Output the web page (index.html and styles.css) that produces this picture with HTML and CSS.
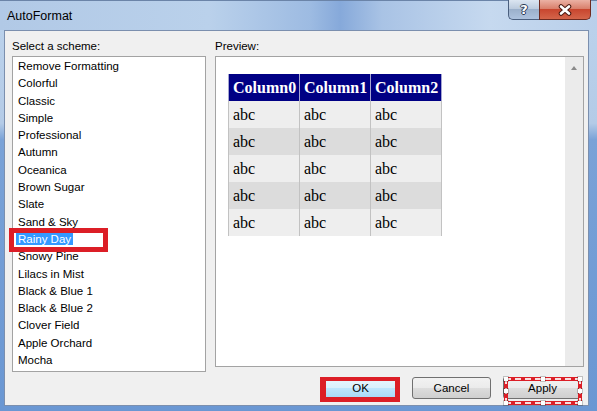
FILE: index.html
```html
<!DOCTYPE html>
<html>
<head>
    <title>AutoFormat</title>
    <link rel="stylesheet" href="styles.css">
</head>
<body>
    <div class="window">
        <div class="titlebar">
            <span class="title">AutoFormat</span>
            <div class="caption-buttons">
                <div class="cap-btn help">?</div>
                <div class="cap-btn close">
                    <svg width="14" height="12" viewBox="0 0 14 12">
                        <path d="M3 2.5 L11 9.5 M11 2.5 L3 9.5" stroke="#4a1a12" stroke-width="4.6" stroke-linecap="round"/>
                        <path d="M3 2.5 L11 9.5 M11 2.5 L3 9.5" stroke="#fff" stroke-width="2.6" stroke-linecap="round"/>
                    </svg>
                </div>
            </div>
        </div>

        <div class="frame">
            <div class="client">
                <div class="label">Select a scheme:</div>
                <div class="label">Preview:</div>

                <ul class="scheme-list">
                    <li>Remove Formatting</li>
                    <li>Colorful</li>
                    <li>Classic</li>
                    <li>Simple</li>
                    <li>Professional</li>
                    <li>Autumn</li>
                    <li>Oceanica</li>
                    <li>Brown Sugar</li>
                    <li>Slate</li>
                    <li>Sand &amp; Sky</li>
                    <li class="selected"><span>Rainy Day</span></li>
                    <li>Snowy Pine</li>
                    <li>Lilacs in Mist</li>
                    <li>Black &amp; Blue 1</li>
                    <li>Black &amp; Blue 2</li>
                    <li>Clover Field</li>
                    <li>Apple Orchard</li>
                    <li>Mocha</li>
                </ul>

                <div class="preview">
                    <div class="preview-area">
                        <table class="grid">
                            <tr><th>Column0</th><th>Column1</th><th>Column2</th></tr>
                            <tr><td>abc</td><td>abc</td><td>abc</td></tr>
                            <tr class="alt"><td>abc</td><td>abc</td><td>abc</td></tr>
                            <tr><td>abc</td><td>abc</td><td>abc</td></tr>
                            <tr class="alt"><td>abc</td><td>abc</td><td>abc</td></tr>
                            <tr><td>abc</td><td>abc</td><td>abc</td></tr>
                        </table>
                    </div>
                    <div class="vscroll"><span class="arrow-up"></span></div>
                </div>

                <div class="buttons">
                    <button class="btn default">OK<span class="mark mark-ok"></span></button>
                    <button class="btn">Cancel</button>
                    <button class="btn">Apply<span class="mark mark-apply"><span class="dash"></span><span class="handle h-tl"></span><span class="handle h-tc"></span><span class="handle h-tr"></span><span class="handle h-ml"></span><span class="handle h-mr"></span><span class="handle h-bl"></span><span class="handle h-bc"></span><span class="handle h-br"></span></span></button>
                </div>
            </div>
        </div>
    </div>
</body>
</html>
```

FILE: styles.css
```css
body {
    margin: 0;
    font-family: "Liberation Sans", Arial, sans-serif;
    font-size: 11.5px;
    color: #000;
}

.window {
    width: 597px;
    height: 411px;
    display: flex;
    flex-direction: column;
    overflow: hidden;
    background: linear-gradient(180deg, #bcd3ec 0%, #b4cbe7 30%, #7aa2d7 34%, #6a97d3 100%);
}

/* title bar */
.titlebar {
    height: 30px;
    flex: none;
    box-sizing: border-box;
    display: flex;
    align-items: flex-start;
    border-top: 1px solid #6b84a8;
    background: linear-gradient(90deg, #b1c9e6 0%, #bad1eb 35%, #9dbbe2 52%, #86a9da 57%, #a9c3e5 64%, #c6d9ef 82%, #b9cfea 100%);
}
.title {
    padding: 7px 0 0 7px;
    font-size: 12.5px;
    line-height: 16px;
}
.caption-buttons {
    display: flex;
    margin: -1px 6px 0 auto;
}
.cap-btn {
    height: 20px;
    box-sizing: border-box;
    display: flex;
    align-items: center;
    justify-content: center;
    border: 1px solid #4a5f7e;
    border-top: none;
}
.help {
    width: 31px;
    border-right: none;
    border-radius: 0 0 0 5px;
    background: linear-gradient(180deg, #dbe5f1 0%, #bccbde 45%, #9bb0cb 50%, #adc2de 100%);
    color: #fff;
    font: bold 13px "DejaVu Sans", sans-serif;
    text-shadow: 1px 0 0 #2a3a55, -1px 0 0 #2a3a55, 0 1px 0 #2a3a55, 0 -1px 0 #2a3a55;
}
.close {
    width: 52px;
    border-color: #6e2a20;
    border-radius: 0 0 5px 0;
    background: linear-gradient(180deg, #ebb1a4 0%, #d9806c 45%, #c8462f 50%, #d4654a 100%);
}

/* dialog body */
.frame {
    flex: 1;
    display: flex;
    padding: 0 8px 5px 4px;
}
.client {
    flex: 1;
    display: grid;
    grid-template-columns: 194px 369px;
    column-gap: 9px;
    align-content: start;
    padding: 7px 4px 0 7px;
    border: 1px solid #7b8fae;
    background: #f0f0f0;
}
.label {
    line-height: 16px;
}

.scheme-list {
    list-style: none;
    margin: 2px 0 0;
    padding: 1px 0 0;
    height: 316px;
    box-sizing: border-box;
    border: 1px solid #a3a3a3;
    background: #fff;
}
.scheme-list li {
    position: relative;
    height: 17.3px;
    line-height: 17.3px;
    padding-left: 5px;
    white-space: nowrap;
}
.scheme-list li.selected span {
    background: #3399ff;
    color: #fff;
    padding: 0 2px;
    margin-left: -2px;
}
.scheme-list li.selected::after {
    content: "";
    position: absolute;
    left: -4px;
    top: -3px;
    width: 99px;
    height: 24px;
    box-sizing: border-box;
    border: 5px solid #dc1e26;
}

.preview {
    margin-top: 2px;
    height: 311px;
    box-sizing: border-box;
    display: flex;
    border: 1px solid #a3a3a3;
    background: #fff;
}
.preview-area {
    flex: 1;
    padding: 17px 0 0 12px;
}
.vscroll {
    width: 18px;
    display: flex;
    justify-content: center;
    background: #ebebeb;
}
.arrow-up {
    margin-top: 9px;
    width: 0;
    height: 0;
    border-left: 3.5px solid transparent;
    border-right: 3.5px solid transparent;
    border-bottom: 4px solid #8a8a8a;
}

.grid {
    width: 214px;
    table-layout: fixed;
    border-collapse: collapse;
    font-family: "Liberation Serif", "Times New Roman", serif;
    font-size: 16px;
}
.grid th,
.grid td {
    height: 27px;
    padding: 0 0 0 4px;
    text-align: left;
    border-left: 1px solid #c2c2c2;
    border-right: 1px solid #c2c2c2;
    background: #eeeeee;
}
.grid th {
    background: #000084;
    color: #fff;
    font-weight: bold;
    border-color: #a5a5d2;
}
.grid tr.alt td {
    background: #dcdcdc;
}

/* bottom buttons */
.buttons {
    grid-column: 1 / -1;
    justify-self: end;
    display: flex;
    gap: 12px;
    margin: 5px 2px 0 0;
}
.btn {
    position: relative;
    width: 79px;
    height: 22px;
    padding: 0;
    font: 11.5px "Liberation Sans", Arial, sans-serif;
    color: #000;
    border: 1px solid #707070;
    border-radius: 3px;
    background: linear-gradient(180deg, #f2f2f2 0%, #ebebeb 49%, #dddddd 50%, #cfcfcf 100%);
}
.btn.default {
    border-color: #3c7fb1;
    background: linear-gradient(180deg, #eaf6fd 0%, #d9f0fc 49%, #bee6fd 50%, #a7d9f5 100%);
}

.mark {
    position: absolute;
    border: solid #dc1e26;
}
.mark-ok {
    left: -2px;
    top: -1px;
    right: -1px;
    bottom: -4px;
    border-width: 4px 5px 5px 6px;
}
.mark-apply {
    left: 0;
    top: -1px;
    right: -1px;
    bottom: -7px;
    border-width: 4px;
}
.mark-apply .dash {
    position: absolute;
    inset: -3px;
    border: 2px dashed rgba(255, 255, 255, 0.85);
}
.handle {
    position: absolute;
    width: 4px;
    height: 4px;
    background: #fff;
    box-shadow: 0 0 0 1px rgba(0, 0, 0, 0.2);
}
.h-tl { left: -4px; top: -4px; }
.h-tc { left: calc(50% - 2px); top: -4px; }
.h-tr { right: -4px; top: -4px; }
.h-ml { left: -4px; top: calc(50% - 2px); }
.h-mr { right: -4px; top: calc(50% - 2px); }
.h-bl { left: -4px; bottom: -4px; }
.h-bc { left: calc(50% - 2px); bottom: -4px; }
.h-br { right: -4px; bottom: -4px; }
```
